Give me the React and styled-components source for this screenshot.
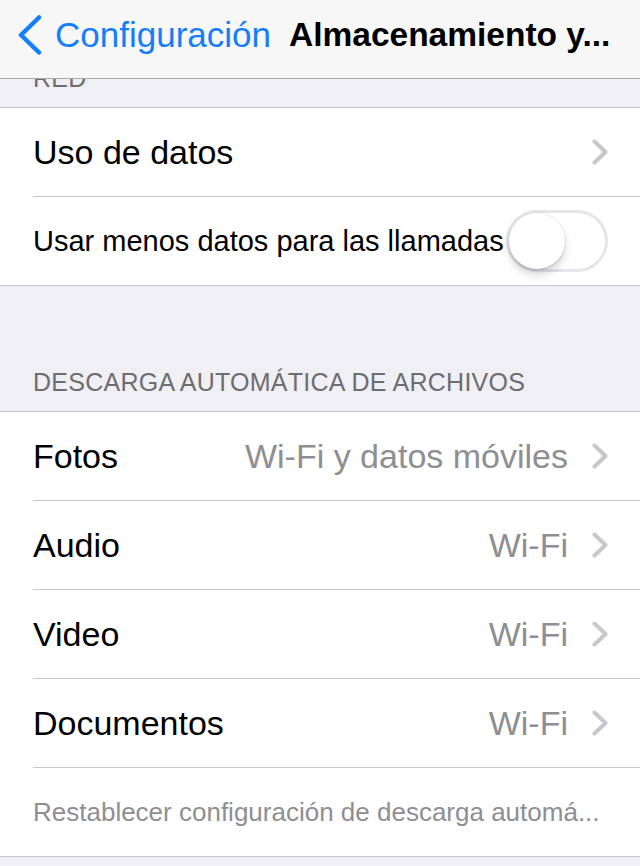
import React from 'react';
import styled, { createGlobalStyle } from 'styled-components';

const Global = createGlobalStyle`
  html, body { margin: 0; padding: 0; background: #efeff4; }
  body { font-family: "Liberation Sans", Arial, sans-serif; -webkit-font-smoothing: antialiased; }
  * { box-sizing: border-box; }
`;

const Screen = styled.div`
  width: 640px;
  min-height: 866px;
  background: #efeff4;
  overflow: hidden;
`;

const NavBar = styled.header`
  height: 79px;
  background: #f7f7f7;
  border-bottom: 1px solid #a9a9ad;
  display: flex;
  align-items: center;
  padding: 0 32px 9px 18px;
`;

const BackButton = styled.div`
  display: flex;
  align-items: center;
  gap: 13px;
  color: #147efb;
  font-size: 35px;
  line-height: 1;
`;

const Title = styled.h1`
  margin: 0 0 0 18px;
  font-size: 33.5px;
  line-height: 1;
  font-weight: 700;
  color: #000;
  white-space: nowrap;
`;

const SectionHeader = styled.div`
  height: ${p => p.$height}px;
  overflow: hidden;
  display: flex;
  flex-direction: column;
  justify-content: flex-end;
  padding: 0 33px 14px;
  font-size: 25px;
  letter-spacing: 0.25px;
  line-height: 30px;
  color: #6d6d72;
  white-space: nowrap;
`;

const Group = styled.section`
  background: #fff;
  border-top: 1px solid #c8c7cc;
  border-bottom: 1px solid #c8c7cc;
`;

const Row = styled.div`
  padding-left: 33px;
  background: #fff;
`;

const RowBody = styled.div`
  height: ${p => (p.$last ? 88 : 89)}px;
  display: flex;
  align-items: center;
  padding-right: ${p => (p.$wide ? 20 : 32)}px;
  border-bottom: ${p => (p.$last ? 'none' : '1px solid #c8c7cc')};
`;

const Label = styled.span`
  flex: 1;
  min-width: 0;
  font-size: ${p => p.$size || 34}px;
  color: ${p => (p.$muted ? '#8e8e93' : '#000')};
  white-space: nowrap;
  overflow: hidden;
  text-overflow: ellipsis;
`;

const Value = styled.span`
  font-size: 34px;
  color: #8e8e93;
  white-space: nowrap;
`;

const ChevronWrap = styled.span`
  display: flex;
  margin-left: 24px;
`;

const Switch = styled.div`
  width: 102px;
  height: 62px;
  border-radius: 31px;
  border: 3px solid #e5e5ea;
  background: #fff;
  flex-shrink: 0;
  display: flex;
  align-items: center;
`;

const Knob = styled.div`
  width: 56px;
  height: 56px;
  border-radius: 50%;
  background: #fff;
  box-shadow: 0 6px 8px rgba(0, 0, 0, 0.16), 0 0 0 1px rgba(0, 0, 0, 0.05), 0 2px 2px rgba(0,0,0,0.06);
`;

const Chevron = () => (
  <ChevronWrap>
    <svg width="16" height="26" viewBox="0 0 16 26">
      <path d="M2.5 2.5 L13.5 13 L2.5 23.5" fill="none" stroke="#c7c7cc" strokeWidth="4" strokeLinecap="round" strokeLinejoin="round" />
    </svg>
  </ChevronWrap>
);

const BackChevron = () => (
  <svg width="24" height="40" viewBox="0 0 24 40">
    <path d="M21 2.5 L3 20 L21 37.5" fill="none" stroke="#147efb" strokeWidth="4.5" strokeLinecap="round" strokeLinejoin="round" />
  </svg>
);

const downloads = [
  { label: 'Fotos', value: 'Wi-Fi y datos móviles' },
  { label: 'Audio', value: 'Wi-Fi' },
  { label: 'Video', value: 'Wi-Fi' },
  { label: 'Documentos', value: 'Wi-Fi' },
];

export default function App() {
  return (
    <Screen>
      <Global />
      <NavBar>
        <BackButton>
          <BackChevron />
          <span>Configuración</span>
        </BackButton>
        <Title>Almacenamiento y...</Title>
      </NavBar>

      <SectionHeader $height={28}>RED</SectionHeader>
      <Group>
        <Row>
          <RowBody>
            <Label>Uso de datos</Label>
            <Chevron />
          </RowBody>
        </Row>
        <Row>
          <RowBody $last>
            <Label $size={29}>Usar menos datos para las llamadas</Label>
            <Switch>
              <Knob />
            </Switch>
          </RowBody>
        </Row>
      </Group>

      <SectionHeader $height={125}>DESCARGA AUTOMÁTICA DE ARCHIVOS</SectionHeader>
      <Group>
        {downloads.map(d => (
          <Row key={d.label}>
            <RowBody>
              <Label>{d.label}</Label>
              <Value>{d.value}</Value>
              <Chevron />
            </RowBody>
          </Row>
        ))}
        <Row>
          <RowBody $last $wide>
            <Label $size={26} $muted>Restablecer configuración de descarga automá...</Label>
          </RowBody>
        </Row>
      </Group>
    </Screen>
  );
}
